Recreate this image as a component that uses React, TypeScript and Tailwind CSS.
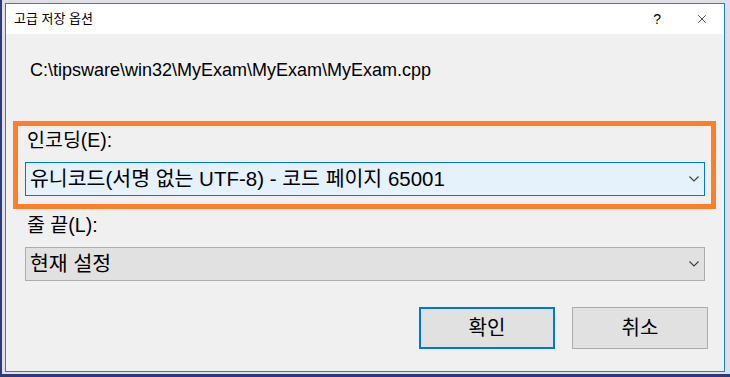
import { X } from 'lucide-react'

const font = {
  fontFamily: '"Liberation Sans", "Noto Sans CJK KR", sans-serif',
}

function Chevron() {
  return (
    <svg width="10" height="6" viewBox="0 0 10 6" className="text-[#3c3c3c]">
      <path d="M0.5 0.5 L5 5 L9.5 0.5" fill="none" stroke="currentColor" strokeWidth="1.1" />
    </svg>
  )
}

function Combo({ value, focused }: { value: string; focused?: boolean }) {
  return (
    <div
      className={
        focused
          ? 'flex h-[34px] items-center justify-between border border-[#0078d7] bg-[#e5f1fb] pl-[4px] pr-[5px]'
          : 'flex h-[34px] items-center justify-between border border-[#adadad] bg-[#e1e1e1] pl-[4px] pr-[5px]'
      }
    >
      <span className="text-[20.5px] leading-[22px] text-black">{value}</span>
      <Chevron />
    </div>
  )
}

export default function App() {
  return (
    <div
      className="h-[377px] w-[730px] overflow-hidden border-b-[3px] border-l-2 border-[#2d3a78] bg-[#dfe0e6] pb-[2px] pl-[3px] pr-[5px] pt-[3px]"
      style={font}
    >
      <div className="flex h-[369px] w-[720px] flex-col border border-[#1883d7] bg-[#f0f0f0]">
        {/* title bar */}
        <div className="flex h-[30px] items-center justify-between bg-white pl-[8px]">
          <span className="text-[13px] text-black">고급 저장 옵션</span>
          <div className="flex items-center">
            <span className="mr-[34px] text-[14px] text-black">?</span>
            <X className="mr-[15px] h-[14px] w-[14px] text-black" strokeWidth={1.2} />
          </div>
        </div>

        {/* body */}
        <div className="flex flex-1 flex-col">
          <div className="ml-[24px] mt-[26px] text-[18px] leading-[20px] text-black">
            C:\tipsware\win32\MyExam\MyExam\MyExam.cpp
          </div>

          <div className="ml-[7px] mr-[8px] mt-[41px] border-[5px] border-[#fe7f2a] pb-[8px] pl-[7px] pr-[6px] pt-[3px]">
            <div className="ml-[2px] text-[19.5px] leading-[22px] text-black">인코딩(E):</div>
            <div className="mt-[11px]">
              <Combo value="유니코드(서명 없는 UTF-8) - 코드 페이지 65001" focused />
            </div>
          </div>

          <div className="ml-[21px] mt-[5px] text-[19.5px] leading-[22px] text-black">줄 끝(L):</div>
          <div className="ml-[19px] mr-[19px] mt-[11px]">
            <Combo value="현재 설정" />
          </div>

          <div className="mr-[16px] mt-[26px] flex justify-end gap-[17px]">
            <button className="h-[42px] w-[136px] border-2 border-[#0078d7] bg-[#e1e1e1] text-[20px] text-black">
              확인
            </button>
            <button className="h-[42px] w-[136px] border border-[#adadad] bg-[#e1e1e1] text-[20px] text-black">
              취소
            </button>
          </div>
        </div>
      </div>
    </div>
  )
}
